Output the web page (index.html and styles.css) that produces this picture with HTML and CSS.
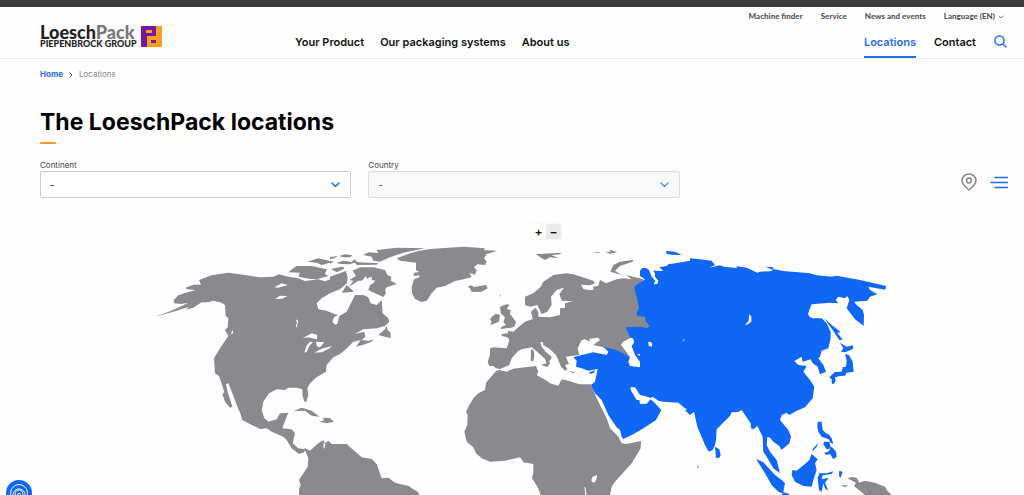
FILE: index.html
```html
<!DOCTYPE html>
<html lang="en">
<head>
    <meta charset="UTF-8">
    <title>Locations - LoeschPack</title>
    <link rel="stylesheet" href="styles.css">
</head>
<body>
<div class="topbar"></div>
<header class="header">
    <a class="logo" href="#">
        <span class="logo-text">
            <span class="logo-name">Loesch<span>Pack</span></span>
            <span class="logo-group">PIEPENBROCK GROUP</span>
        </span>
        <svg class="logo-mark" viewBox="0 0 21 21" aria-hidden="true">
            <path fill="#ff9f1c" d="M0 0h21v21H0z"/>
            <path fill="#7418a0" fill-rule="evenodd" d="M0 0h15v10H6v11H0zM5 4h6v3H5zM10 14h5v3h-5z"/>
        </svg>
    </a>
    <nav class="nav">
        <a href="#">Your Product</a>
        <a href="#">Our packaging systems</a>
        <a href="#">About us</a>
    </nav>
    <div class="header-right">
        <nav class="meta">
            <a href="#">Machine finder</a>
            <a href="#">Service</a>
            <a href="#">News and events</a>
            <button type="button">Language (EN)
                <svg viewBox="0 0 6 4" aria-hidden="true"><path d="M1 1l2 2 2-2"/></svg>
            </button>
        </nav>
        <nav class="nav nav-right">
            <a class="active" href="#">Locations</a>
            <a href="#">Contact</a>
            <button class="search" type="button" aria-label="Search">
                <svg viewBox="0 0 13 13" aria-hidden="true"><circle cx="5.5" cy="5.5" r="4.6"/><path d="M9 9l3 3"/></svg>
            </button>
        </nav>
    </div>
</header>

<main>
    <nav class="breadcrumb">
        <a href="#">Home</a>
        <svg viewBox="0 0 4 6" aria-hidden="true"><path d="M1 1l2 2-2 2"/></svg>
        <span>Locations</span>
    </nav>
    <h1>The LoeschPack locations</h1>

    <form class="filter">
        <div class="field">
            <label for="continent">Continent</label>
            <div class="select">
                <select id="continent"><option>-</option></select>
                <svg viewBox="0 0 9 6" aria-hidden="true"><path d="M1 1l3.500 3.500L8 1"/></svg>
            </div>
        </div>
        <div class="field">
            <label for="country">Country</label>
            <div class="select">
                <select id="country" disabled><option>-</option></select>
                <svg viewBox="0 0 9 6" aria-hidden="true"><path d="M1 1l3.500 3.500L8 1"/></svg>
            </div>
        </div>
        <div class="views">
            <button type="button" aria-label="Map view">
                <svg class="pin" viewBox="0 0 16 18" aria-hidden="true"><path d="M8 17C5 14.500 1 11.500 1 7.500a7 6.600 0 0 1 14 0C15 11.500 11 14.500 8 17z"/><circle cx="8" cy="7.500" r="2.400"/></svg>
            </button>
            <button type="button" aria-label="List view">
                <svg class="list" viewBox="0 0 18 13" aria-hidden="true"><path d="M5 1.500h12.500M1 6.500h16.500M5 11.500h12.500"/></svg>
            </button>
        </div>
    </form>

    <div class="zoom">
        <button type="button" aria-label="Zoom in">+</button>
        <button class="off" type="button" aria-label="Zoom out">−</button>
    </div>
</main>

<svg class="map" viewBox="0 0 3072 765" role="img" aria-label="World map">
    <!-- America -->
    <g class="land" transform="translate(435)">
        <path d="M30 230L75 214 110 198 130 188 108 192 88 190 86 180 100 166 122 158 152 150 125 148 122 143 145 134 168 134 162 120 200 106 250 98 300 105 345 112 385 110 402 103 430 110 460 115 480 123 520 118 540 124 555 118 600 95 605 100 608 115 605 130 585 148 555 160 530 175 515 190 520 208 545 212 568 222 580 225 568 230 562 245 570 254 577 252 583 228 605 215 615 195 630 165 655 165 670 172 677 190 695 195 710 180 713 220 730 235 733 245 720 258 695 265 655 268 630 282 658 275 661 290 650 300 625 305 600 330 585 342 565 352 545 375 543 395 515 412 495 430 487 445 490 465 484 486 478 484 472 465 472 448 455 443 430 443 420 450 395 448 372 460 355 485 350 510 358 535 370 545 395 538 405 520 430 518 425 530 412 565 440 568 450 580 443 610 460 625 480 628 478 637 462 642 440 625 425 600 415 590 380 575 365 565 345 567 320 555 292 540 286 520 275 495 262 460 250 430 243 432 248 455 262 500 255 503 240 485 232 462 238 457 228 425 222 408 210 400 207 355 225 325 250 288 240 270 248 262 250 235 242 228 240 195 230 188 205 182 190 187 170 187 145 203 122 209 132 200 90 214z"/>
        <path d="M460 640L480 625 495 632 520 610 535 600 540 610 550 602 560 612 605 612 625 630 650 652 680 657 695 672 710 715 730 713 750 728 790 738 820 757 823 765H462V750L467 735 462 720 488 680 490 655 480 630z"/>
        <path d="M430 97L442 87 455 78 500 78 545 88 540 102 550 108 515 118 490 116 460 110 465 98zM487 65L520 55 565 65 530 75 515 68zM552 52L578 48 570 54zM558 87L590 80 600 84 570 94z"/>
        <path d="M447 513L470 503 500 512 510 520 523 530 500 527 480 512zM523 545L538 541 532 533 555 535 567 545 545 550z"/>
        <path class="water" d="M472 295L500 280 517 285 515 298 490 292zM495 305L504 306 493 318 485 335 478 338 484 318zM512 305L538 307 525 322 517 320zM508 338L530 326 562 318 550 327 530 337zM388 142L410 130 428 135 400 143zM390 177L405 167 428 168 412 176zM452 238L460 242 455 263 452 258 456 249zM536 609L541 612 538 627 535 620zM262 270L265 280 258 282z"/>
    </g>
    <!-- Greenland and the arctic islands -->
    <g class="land" transform="translate(990)">
        <path d="M200 55L240 40 265 33 300 27 400 20 465 25 462 31 502 32 470 42 462 55 470 65 465 75 442 73 432 82 440 90 436 104 418 99 425 112 400 118 375 123 345 138 320 143 305 160 290 182 275 186 255 177 246 160 245 140 252 118 268 112 268 106 250 108 252 98 268 96 258 90 258 68 210 62z"/>
        <path d="M140 30L200 23 285 25 220 38 180 52 150 65 130 62 125 50 100 45 115 37 145 39zM70 60L85 67 145 70 140 74 80 75zM28 48L45 43 68 46 60 52 40 52zM20 68L40 62 65 66 60 73 30 72zM0 50L18 54 0 57zM0 66L12 64 0 72zM10 89L38 80 42 86 20 97zM60 73L72 58 82 65zM0 110L50 92 42 112 52 128 22 146 0 150z"/>
        <path d="M68 92L90 82 130 82 165 90 172 105 184 110 183 122 200 132 170 142 165 150 168 160 160 171 135 160 115 150 120 135 132 128 120 110 105 122 85 122 58 140 70 122 58 120 78 108zM35 158L50 135 72 155zM145 285L165 268 170 257 173 270 182 278 182 294 165 290zM78 320L92 300 120 302 130 297 125 305 100 314z"/>
        <path class="water" d="M75 140L100 118 107 108 112 118 125 110 125 120 137 122 118 134 98 142 88 152z"/>
    </g>
    <!-- Europe and Africa -->
    <g class="land" transform="translate(1350)">
        <path d="M225 170L250 160 272 140 280 125 310 105 350 100 370 103 430 122 435 130 420 136 393 134 400 147 420 151 430 150 430 140 445 137 450 120 468 130 500 118 520 115 545 118 528 105 580 118 570 140V225L595 232 600 262 550 275 545 292 520 305 513 315 525 330 540 352 460 322 430 315 450 300 445 293 418 296 420 305 405 298 395 300 383 325 388 345 347 350 357 372 345 375 352 388 345 392 333 380 325 360 318 345 300 328 280 315 279 306 271 307 275 320 287 335 305 350 303 358 298 362 300 370 292 382 273 374 290 370 285 357 262 335 245 322 215 328 205 332 185 355 178 375 150 387 138 385 130 378 118 378 113 365 120 345 120 325 130 322 170 325 178 300 172 292 155 288 155 282 175 280 173 272 190 275 205 262 225 245 248 237 243 215 256 203 265 215 265 230 300 232 330 225 330 205 345 203 345 190 368 184 335 182 328 162 342 143 320 150 303 170 305 195 292 215 275 222 270 212 262 195 240 200 225 195z"/>
        <path d="M150 200L172 192 178 195 170 207 182 210 180 222 198 245 195 257 185 263 152 267 155 260 168 255 160 247 165 232 152 220zM128 228L138 221 150 225 147 245 120 256 125 245 120 238zM53 140L63 136 72 141 108 135 113 145 95 155 65 156 60 145zM257 42L280 41 335 38 330 43 305 45 325 55 300 52 285 60 275 55zM428 36L452 36 445 39zM465 35L480 36 480 30 502 36 480 41zM550 59L510 65 490 75 481 95 515 105 495 92 510 78 548 65zM243 330L250 328 253 345 250 364 242 362zM150 165L153 165 152 172zM358 393L375 397 368 400z"/>
        <path d="M138 393L147 390 170 395 190 386 225 382 258 378 265 395 260 405 290 422 300 430 325 437 335 418 360 424 388 433 423 433 440 475 470 535 480 565 505 590 515 610 530 612 573 603 572 625 545 670 495 725 485 740 480 765H272L265 745 246 715 250 697 250 672 230 668 222 668 210 652 165 662 120 665 95 655 78 640 70 622 50 605 43 575 52 555 53 525 48 515 55 500 70 475 85 460 105 450 108 428z"/>
        <path class="water" d="M428 710L440 705 441 712 435 727 426 727 424 720zM403 740L406 742 410 765H406z"/>
    </g>
    <!-- Asia -->
    <g class="land asia" transform="translate(1860)">
        <path d="M60 92L68 83 80 85 90 92 105 92 130 93 118 82 140 78 145 73 175 68 210 62 210 55 240 58 275 62 285 75 268 83 300 76 310 80 350 84 350 79 380 83 412 98 420 95 450 94 460 90 436 80 460 82 460 87 490 93 570 100 590 106 635 110 650 107 720 120 798 138 796 149 745 140 750 150 772 163 750 170 742 182 702 185 710 195 728 210 732 225 731 258 705 238 680 205 688 180 682 168 675 175 655 170 647 180 655 190 630 188 575 193 570 205 564 222 570 232 580 235 605 235 620 250 632 275 632 295 625 325 605 332 600 350 595 355 610 375 618 395 600 403 593 380 578 370 572 358 548 365 545 350 523 363 535 375 560 378 550 395 570 420 583 440 578 475 555 502 530 512 508 525 500 518 485 525 480 540 505 570 513 590 508 610 485 630 478 618 460 605 450 593 442 590 440 615 450 635 470 660 480 700 460 685 440 650 430 635 428 590 412 558 400 568 393 565 392 550 375 525 365 510 355 516 335 517 330 528 290 568 288 600 285 615 278 630 266 635 255 615 232 560 222 515 210 525 195 511 202 508 195 505 175 488 130 485 115 482 98 470 92 474 75 468 60 465 45 442 32 442 32 450 50 480 58 480 60 492 80 491 92 478 105 490 124 510 108 540 75 562 40 583 10 597 5 590 0 570-10 562-35 525-55 480-75 460-80 450-87 435-75 425-67 387-95 392-115 385-132 380-130 362-140 352-115 345-80 337-40 345-35 335-50 320-10 330 30 352 25 365 30 378 60 382 60 365 45 345 35 318 42 308 40 296 30 292 17 262 60 260 82 264 88 257 76 242 75 230 52 228 50 218 57 205 52 180 42 140 75 118 60 108z"/>
        <path d="M138 33L165 35 185 45 155 44 140 42zM285 620L298 628 302 645 298 653 288 654zM232 672L236 684 233 684zM-92 397L-75 391-78 398-90 402zM408 657L430 667 465 705 485 720 495 730 490 755 502 765 475 755 455 735 435 700z"/>
        <path class="water" d="M85 85L95 86 105 100 105 110 115 122 112 132 101 133 106 122 95 110zM85 305L92 306 97 312 95 320 86 317zM50 341L60 343 60 349zM388 222L394 230 394 245 384 253 375 255 386 242zM188 306L190 299 195 297z"/>
    </g>
    <!-- Japan and South East Asia -->
    <g class="land asia" transform="translate(2250)">
        <path d="M222 234L245 255 272 276 262 278 278 299 268 300 248 270zM270 308L290 320 308 316 310 325 302 330 285 337 273 335 280 325zM285 342L297 345 308 365 311 395 290 398 285 407 270 408 255 412 257 424 250 433 245 430 245 418 238 412 255 396 275 395 278 382 288 380 290 362zM203 545L215 545 218 570 235 586 230 575 245 595 250 612 242 608 236 598 215 590 205 575 202 560zM222 605L238 605 243 625 230 628 220 613zM223 638L235 635 245 620 258 635 260 650 250 658 240 642 228 645zM205 608L200 620 187 635 190 625z"/>
        <path d="M185 642L203 658 195 670 200 690 190 720 185 740 160 738 135 725 125 705 127 690 140 692 165 672 178 660zM208 700L230 700 250 694 245 702 218 706 215 718 236 713 225 728 235 752 225 745 220 730 215 755 207 750 203 715zM268 692L278 695 272 713 267 708zM272 736L295 737 285 740zM95 763L110 758 120 765H95z"/>
        <path class="papua" d="M292 715L305 711 320 713 328 728 345 722 375 728 405 740 410 750 425 765H345L312 738 318 728z"/>
    </g>
</svg>

<button class="privacy" type="button" aria-label="Privacy settings">
    <svg viewBox="0 0 26 26" aria-hidden="true"><path d="M5 16a8.500 8.500 0 1 1 16 0M7.500 18a6.200 6.200 0 1 1 11 0M9.500 18c-1-5 0-8 3.500-8s4.500 3 3.500 8M11.800 18v-3.500a1.200 1.200 0 0 1 2.400 0V18"/></svg>
</button>
</body>
</html>
```
FILE: styles.css
```css
* {
    box-sizing: border-box;
}

body {
    margin: 0;
    background: #fefefe;
    color: #111;
    font-family: Inter, "Open Sans", sans-serif;
    font-size: 8px;
}

a {
    color: inherit;
    text-decoration: none;
}

button {
    padding: 0;
    border: 0;
    background: none;
    color: inherit;
    font: inherit;
    cursor: pointer;
}

svg {
    display: block;
    fill: none;
    stroke-linecap: round;
    stroke-linejoin: round;
}

.topbar {
    height: 7px;
    background: #3c3c3c;
}

.header {
    display: grid;
    grid-template-columns: 255px 1fr auto;
    padding: 0 17px 0 40px;
    border-bottom: 1px solid #ebebeb;
}

/* logo */
.logo {
    display: flex;
    align-items: center;
    gap: 4px;
    padding-top: 8px;
}

.logo-text {
    display: flex;
    flex-direction: column;
    width: 97px;
    white-space: nowrap;
}

.logo-name {
    color: #222;
    font: 900 18px/14px Lato, sans-serif;
}

.logo-name span {
    color: #777;
}

.logo-group {
    color: #222;
    font: 900 9px/9px Lato, sans-serif;
}

.logo-mark {
    width: 21px;
    height: 21px;
}

/* navigation */
.nav {
    display: flex;
    align-items: flex-end;
    gap: 16px;
    font-size: 11px;
    font-weight: 600;
    line-height: 14px;
    white-space: nowrap;
}

.nav a {
    padding-bottom: 7px;
    border-bottom: 2px solid transparent;
}

.nav .active {
    color: #1f6df5;
    border-color: #1f6df5;
}

.header-right {
    display: flex;
    flex-direction: column;
    gap: 13px;
    padding-top: 4px;
}

.nav-right {
    justify-content: flex-end;
    gap: 18px;
}

.search {
    align-self: flex-start;
}

.search svg {
    width: 13px;
    height: 13px;
    stroke: #1f6df5;
    stroke-width: 1.5;
}

.meta {
    display: flex;
    justify-content: flex-end;
    gap: 18px;
    padding-right: 3px;
    color: #555;
    font-family: Lato, sans-serif;
    font-size: 8px;
    font-weight: 900;
    line-height: 11px;
    white-space: nowrap;
}

.meta button {
    display: flex;
    align-items: center;
    gap: 3px;
}

.meta svg {
    width: 6px;
    height: 4px;
    stroke: #888;
}

/* content */
main {
    padding: 10px 16px 0 40px;
}

.breadcrumb {
    display: flex;
    align-items: center;
    gap: 6px;
    color: #888;
    line-height: 11px;
}

.breadcrumb a {
    color: #1f6df5;
    font-weight: 700;
}

.breadcrumb svg {
    width: 4px;
    height: 6px;
    stroke: #555;
}

h1 {
    margin: 28px 0 16px;
    color: #000;
    font-size: 23px;
    font-weight: 700;
    line-height: 28px;
}

h1::after {
    content: "";
    display: block;
    width: 16px;
    height: 2px;
    margin-top: 6px;
    border-radius: 1px;
    background: #f79a1c;
}

.filter {
    display: grid;
    grid-template-columns: 1fr 1fr 1fr;
    align-items: end;
    gap: 17px;
}

.field label {
    display: block;
    color: #444;
    line-height: 11px;
}

.select {
    display: grid;
    align-items: center;
}

.select select,
.select svg {
    grid-area: 1 / 1;
}

.select select {
    width: 100%;
    height: 27px;
    padding: 0 9px;
    border: 1px solid #ccc;
    border-radius: 2px;
    background: #fff;
    color: #222;
    font: 10px Inter, sans-serif;
    appearance: none;
}

.select select:disabled {
    border-color: #ddd;
    background: #f8f8f8;
    color: #555;
    opacity: 1;
}

.select svg {
    justify-self: end;
    width: 9px;
    height: 6px;
    margin-right: 11px;
    stroke: #1f6df5;
    stroke-width: 1.5;
    pointer-events: none;
}

.select select:disabled + svg {
    opacity: .7;
}

.views {
    display: flex;
    justify-content: flex-end;
    align-items: center;
    gap: 13px;
    height: 32px;
}

.pin {
    width: 16px;
    height: 18px;
    stroke: #888;
    stroke-width: 1.5;
}

.list {
    width: 18px;
    height: 13px;
    stroke: #1f6df5;
    stroke-width: 1.5;
}

.zoom {
    display: flex;
    justify-content: center;
    margin: 26px 0 1px;
    padding-left: 44px;
}

.zoom button {
    width: 15px;
    height: 15px;
    background: #fff;
    box-shadow: 0 0 3px #eee;
    font-size: 12px;
    font-weight: 600;
    line-height: 14px;
}

.zoom .off {
    background: #ebebeb;
}

/* map */
.map {
    width: 100%;
}

.land {
    fill: #8a898d;
}

.asia {
    fill: #1066f5;
}

.water {
    fill: #fefefe;
}

.papua {
    fill: #8a898d;
}

.privacy {
    position: fixed;
    bottom: -11px;
    left: 6px;
    width: 26px;
    height: 26px;
    border-radius: 50%;
    background: #1066f5;
}

.privacy svg {
    stroke: #fff;
}
```
